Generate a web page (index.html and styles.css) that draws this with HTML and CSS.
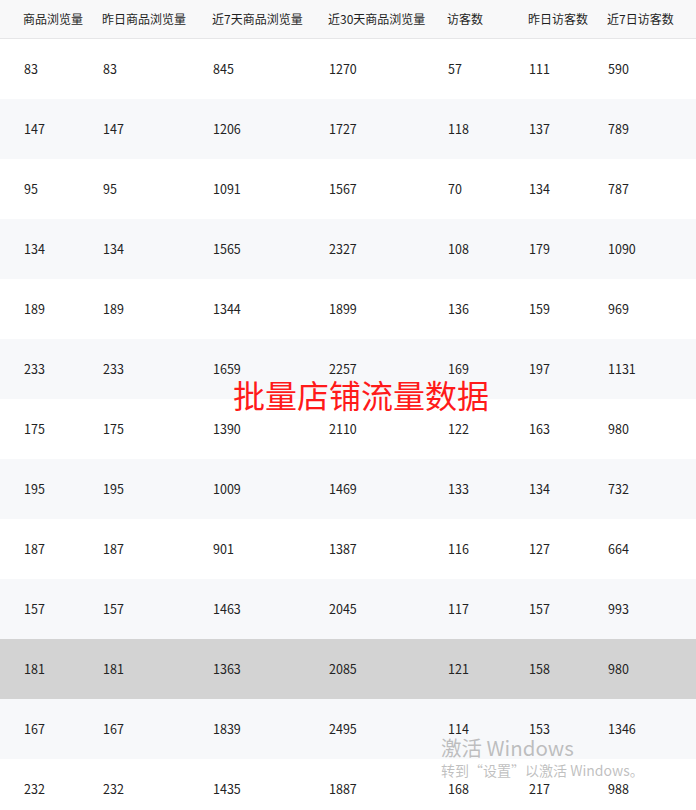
FILE: index.html
```html
<!DOCTYPE html>
<html lang="zh-CN">
<head>
<meta charset="utf-8">
<link rel="stylesheet" href="styles.css">
</head>
<body>
<div class="page">
<table class="grid">
<colgroup>
<col class="c1"><col class="c2"><col class="c3"><col class="c4"><col class="c5"><col class="c6"><col class="c7">
</colgroup>
<thead>
<tr><th>商品浏览量</th><th>昨日商品浏览量</th><th>近7天商品浏览量</th><th>近30天商品浏览量</th><th>访客数</th><th>昨日访客数</th><th>近7日访客数</th></tr>
</thead>
<tbody>
<tr><td>83</td><td>83</td><td>845</td><td>1270</td><td>57</td><td>111</td><td>590</td></tr>
<tr><td>147</td><td>147</td><td>1206</td><td>1727</td><td>118</td><td>137</td><td>789</td></tr>
<tr><td>95</td><td>95</td><td>1091</td><td>1567</td><td>70</td><td>134</td><td>787</td></tr>
<tr><td>134</td><td>134</td><td>1565</td><td>2327</td><td>108</td><td>179</td><td>1090</td></tr>
<tr><td>189</td><td>189</td><td>1344</td><td>1899</td><td>136</td><td>159</td><td>969</td></tr>
<tr><td>233</td><td>233</td><td>1659</td><td>2257</td><td>169</td><td>197</td><td>1131</td></tr>
<tr><td>175</td><td>175</td><td>1390</td><td>2110</td><td>122</td><td>163</td><td>980</td></tr>
<tr><td>195</td><td>195</td><td>1009</td><td>1469</td><td>133</td><td>134</td><td>732</td></tr>
<tr><td>187</td><td>187</td><td>901</td><td>1387</td><td>116</td><td>127</td><td>664</td></tr>
<tr><td>157</td><td>157</td><td>1463</td><td>2045</td><td>117</td><td>157</td><td>993</td></tr>
<tr class="hover"><td>181</td><td>181</td><td>1363</td><td>2085</td><td>121</td><td>158</td><td>980</td></tr>
<tr><td>167</td><td>167</td><td>1839</td><td>2495</td><td>114</td><td>153</td><td>1346</td></tr>
<tr><td>232</td><td>232</td><td>1435</td><td>1887</td><td>168</td><td>217</td><td>988</td></tr>
</tbody>
</table>
<div class="banner">批量店铺流量数据</div>
<div class="watermark">
<div class="wm-title">激活 Windows</div>
<div class="wm-sub">转到“设置”以激活 Windows。</div>
</div>
</div>
</body>
</html>
```
FILE: styles.css
```css
html, body {
  margin: 0;
  padding: 0;
  background: #ffffff;
}
body {
  font-family: "Noto Sans CJK SC", "Noto Sans", sans-serif;
  font-size: 12px;
  color: #222;
  overflow: hidden;
}
.page {
  position: relative;
  width: 696px;
  height: 810px;
  overflow: hidden;
}
.grid {
  width: 696px;
  border-collapse: collapse;
  table-layout: fixed;
}
.c1 { width: 102px; }
.c2 { width: 110px; }
.c3 { width: 116px; }
.c4 { width: 119px; }
.c5 { width: 81px; }
.c6 { width: 79px; }
.c7 { width: 89px; }
.grid th {
  height: 38px;
  padding: 0;
  text-align: left;
  font-weight: normal;
  color: #1f1f1f;
  background: #f8f8f9;
  border-bottom: 1px solid #e6e6e8;
  white-space: nowrap;
  line-height: 38px;
}
.grid th:first-child { padding-left: 23px; }
.grid td {
  height: 59px;
  padding: 0 0 1px 1px;
  line-height: 59px;
  font-size: 12.5px;
  color: #222;
}
.grid td:first-child { padding-left: 24px; }
.grid tbody tr:nth-child(even) td { background: #f7f8fa; }
.grid tbody tr.hover td { background: #d3d3d3; }
.banner {
  position: absolute;
  left: 233px;
  top: 372px;
  font-size: 32px;
  line-height: 44px;
  color: #ff1a1a;
  white-space: nowrap;
}
.watermark {
  position: absolute;
  left: 441px;
  top: 734px;
  color: rgba(150,150,150,0.6);
  white-space: nowrap;
}
.wm-title {
  font-size: 20.5px;
  line-height: 26px;
}
.wm-sub {
  font-size: 14px;
  line-height: 20px;
}
```
